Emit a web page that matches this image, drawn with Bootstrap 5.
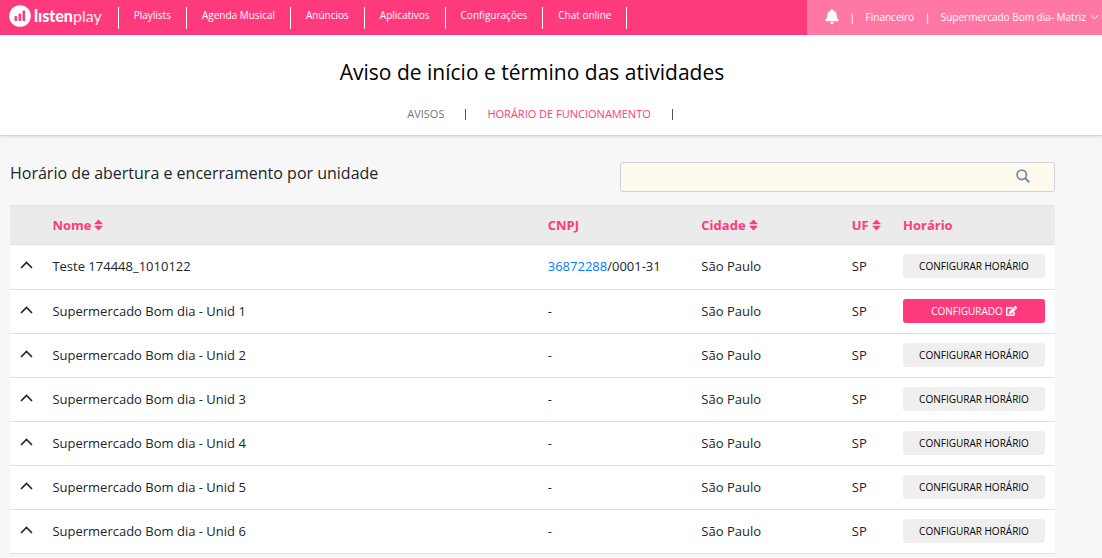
<!DOCTYPE html>
<html lang="pt-BR">
<head>
<meta charset="utf-8">
<meta name="viewport" content="width=device-width, initial-scale=1">
<title>Listenplay - Horário de funcionamento</title>
<link href="https://cdn.jsdelivr.net/npm/bootstrap@5.3.0/dist/css/bootstrap.min.css" rel="stylesheet">
<script src="https://cdn.jsdelivr.net/npm/bootstrap@5.3.0/dist/js/bootstrap.bundle.min.js" defer></script>
<style>
:root { --pink: #ff3a7c; --pink-light: #ff78a5; }
body { font-family: "Open Sans", "Noto Sans", sans-serif; font-size: 13px; line-height: 20px; background: #f7f7f7; color: #212529; }
a { text-decoration: none; }
svg { display: block; flex: none; }
.topbar { background: var(--pink); height: 35px; color: #fff; font-size: 10px; line-height: 14px; }
.topbar a { color: #fff; }
.brand { padding: 5px 16px 0 9px; gap: 3px; }
.brand-name { font-family: Lato, sans-serif; font-size: 16px; line-height: 22px; font-weight: 900; }
.brand-name span { font-weight: 400; opacity: .9; }
.main-menu { margin: 7px 0 0; height: 22px; border-left: 1px solid #fff; }
.main-menu li { border-right: 1px solid #fff; padding: 1px 15px 0; }
.account { background: var(--pink-light); width: 295px; padding: 0 3px 2px 18px; }
.page-head { background: #fff; border-bottom: 1px solid #d3d6d6; box-shadow: 0 1px 3px rgba(0,0,0,.1); padding: 23px 0 11px; height: 101px; }
.page-head h1 { font-size: 21px; line-height: 28px; font-weight: 400; color: #000; margin: 0 38px 20px 0; }
.tabs { font-size: 11px; line-height: 16px; gap: 21px; margin-right: 22px; }
.tabs a { color: #777; }
.tabs a.active { color: var(--pink); }
.tabs i { width: 1px; height: 11px; background: #555; }
.content-area { margin: 26px 47px 0 10px; }
.content-area h2 { font-size: 16px; line-height: 22px; margin: 0; }
.search-box { width: 435px; height: 30px; background: #fffaee; border: 1px solid #cdd1da; border-radius: 3px; padding: 0 24px 2px 0; }
.search-box input { background: transparent; border: 0; outline: 0; min-width: 0; padding: 0 10px; }
.search-box button { background: none; border: 0; padding: 0; }
.units { margin: 13px 0 0; table-layout: fixed; --bs-table-bg: #fff; --bs-table-color: #212529; }
.units > :not(caption) > * > * { padding: 0 10px 1px; height: 44px; border-color: #dee2e6; vertical-align: middle; white-space: nowrap; }
.units > tbody > tr:first-child > td { height: 45px; padding-bottom: 2px; }
.units > thead > tr > th { height: 39px; padding-bottom: 0; background: #ebebeb; color: var(--pink); font-weight: 700; border-top: 1px solid #dee2e6; }
.sort { background: none; border: 0; padding: 0; font-weight: 700; color: inherit; display: inline-flex; align-items: center; gap: 3px; }
.toggle { background: none; border: 0; padding: 0 0 2px; display: block; }
.units tbody .cfg { width: 100%; height: 24px; display: flex; align-items: center; justify-content: center; gap: 3px; padding: 0; font-size: 10px; line-height: 14px; background: #efefef; color: #000; border: 0; border-radius: 3px; }
.units tbody .cfg.done { background: var(--pink); color: #fff; }
.units a { color: #007bff; }
</style>
</head>
<body>
<svg width="0" height="0" class="position-absolute" aria-hidden="true">
  <symbol id="sort" viewBox="0 0 10 12"><path d="M5 0.2 9.3 4.8H.7zM5 11.8.7 7.2h8.6z" fill="currentColor" stroke="currentColor" stroke-width=".6" stroke-linejoin="round"/></symbol>
  <symbol id="up" viewBox="0 0 13 8"><path d="M1 7 6.5 1.500 12 7" fill="none" stroke="#212529" stroke-width="1.600"/></symbol>
</svg>
<header class="topbar d-flex">
  <a class="brand d-flex align-items-start" href="#">
    <svg width="22" height="22" viewBox="0 0 22 22"><circle cx="11" cy="11" r="10.800" fill="#fff"/><g fill="#ff3a7c"><rect x="5.500" y="11" width="2.600" height="5" rx="1"/><rect x="9.500" y="8.500" width="2.600" height="7.500" rx="1"/><rect x="13.500" y="5.500" width="2.600" height="10.500" rx="1"/></g></svg>
    <div class="brand-name">lısten<span>play</span></div>
  </a>
  <ul class="main-menu list-unstyled d-flex">
    <li><a href="#">Playlists</a></li><li><a href="#">Agenda Musical</a></li><li><a href="#">Anúncios</a></li><li><a href="#">Aplicativos</a></li><li><a href="#">Configurações</a></li><li><a href="#">Chat online</a></li>
  </ul>
  <div class="account ms-auto d-flex align-items-center justify-content-between">
    <a href="#" aria-label="Notificações"><svg width="14" height="15" viewBox="0 0 448 512"><path fill="#fff" d="M224 512c35.300 0 64-28.700 64-64H160c0 35.300 28.600 64 64 64zm215.400-149.700C420 341.500 383.900 310.300 383.900 208c0-77.700-54.500-139.900-127.900-155.200V32c0-17.700-14.300-32-32-32s-32 14.300-32 32v20.800C118.600 68.100 64.100 130.300 64.100 208c0 102.300-36.100 133.500-55.500 154.300C2.600 368.700 0 376.500 0 384c.1 16.400 13 32 32.100 32h383.800c19.100 0 32-15.600 32.100-32 0-7.500-2.600-15.300-8.600-21.700z"/></svg></a>
    <span>|</span><a href="#">Financeiro</a><span>|</span>
    <a href="#" class="d-flex align-items-center gap-1">Supermercado Bom dia- Matriz <svg width="9" height="6" viewBox="0 0 9 6"><path d="M.7 1 4.500 4.800 8.300 1" fill="none" stroke="#fff"/></svg></a>
  </div>
</header>
<section class="page-head d-flex flex-column align-items-center">
  <h1>Aviso de início e término das atividades</h1>
  <nav class="tabs d-flex align-items-center"><a href="#">AVISOS</a><i></i><a href="#" class="active">HORÁRIO DE FUNCIONAMENTO</a><i></i></nav>
</section>
<main class="content-area">
  <div class="d-flex justify-content-between align-items-start">
    <h2>Horário de abertura e encerramento por unidade</h2>
    <form class="search-box d-flex align-items-center">
      <input type="search" class="flex-fill" aria-label="Buscar unidade">
      <button type="button" aria-label="Buscar"><svg width="14" height="14" viewBox="0 0 14 14"><g fill="none" stroke="#7590a0" stroke-width="1.800"><circle cx="5.800" cy="5.800" r="4.700"/><path d="m9.200 9.200 4 4" stroke-width="2.200"/></g></svg></button>
    </form>
  </div>
  <table class="table units">
    <colgroup><col style="width:3.1%"><col style="width:47.4%"><col style="width:14.700%"><col style="width:14.400%"><col style="width:4.900%"><col style="width:15.500%"></colgroup>
    <thead><tr><th></th><th><button class="sort">Nome <svg width="9" height="12"><use href="#sort"/></svg></button></th><th>CNPJ</th><th><button class="sort">Cidade <svg width="9" height="12"><use href="#sort"/></svg></button></th><th><button class="sort">UF <svg width="9" height="12"><use href="#sort"/></svg></button></th><th>Horário</th></tr></thead>
    <tbody>
      <tr><td><button class="toggle" aria-label="Expandir"><svg width="13" height="8"><use href="#up"/></svg></button></td><td>Teste 174448_1010122</td><td><a href="#">36872288</a>/0001-31</td><td>São Paulo</td><td>SP</td><td><button class="cfg">CONFIGURAR HORÁRIO</button></td></tr>
      <tr><td><button class="toggle" aria-label="Expandir"><svg width="13" height="8"><use href="#up"/></svg></button></td><td>Supermercado Bom dia - Unid 1</td><td>-</td><td>São Paulo</td><td>SP</td><td><button class="cfg done">CONFIGURADO <svg width="11" height="10" viewBox="0 0 576 512"><path fill="#fff" stroke="#fff" stroke-width="20" d="M402.600 83.200l90.200 90.200c3.800 3.800 3.800 10 0 13.800L274.400 405.600l-92.800 10.300c-12.400 1.400-22.900-9.100-21.500-21.500l10.300-92.800L388.800 83.200c3.800-3.800 10-3.800 13.800 0zm162-22.900l-48.800-48.800c-15.200-15.200-39.900-15.200-55.200 0l-35.400 35.400c-3.800 3.800-3.800 10 0 13.800l90.200 90.200c3.800 3.800 10 3.800 13.800 0l35.400-35.400c15.200-15.300 15.200-40 0-55.200zM384 346.200V448H64V128h229.800c3.200 0 6.200-1.300 8.500-3.500l40-40c7.600-7.600 2.200-20.500-8.500-20.500H48C21.500 64 0 85.500 0 112v352c0 26.500 21.500 48 48 48h352c26.500 0 48-21.500 48-48V306.200c0-10.700-12.900-16-20.500-8.500l-40 40c-2.200 2.300-3.500 5.300-3.500 8.500z"/></svg></button></td></tr>
      <tr><td><button class="toggle" aria-label="Expandir"><svg width="13" height="8"><use href="#up"/></svg></button></td><td>Supermercado Bom dia - Unid 2</td><td>-</td><td>São Paulo</td><td>SP</td><td><button class="cfg">CONFIGURAR HORÁRIO</button></td></tr>
      <tr><td><button class="toggle" aria-label="Expandir"><svg width="13" height="8"><use href="#up"/></svg></button></td><td>Supermercado Bom dia - Unid 3</td><td>-</td><td>São Paulo</td><td>SP</td><td><button class="cfg">CONFIGURAR HORÁRIO</button></td></tr>
      <tr><td><button class="toggle" aria-label="Expandir"><svg width="13" height="8"><use href="#up"/></svg></button></td><td>Supermercado Bom dia - Unid 4</td><td>-</td><td>São Paulo</td><td>SP</td><td><button class="cfg">CONFIGURAR HORÁRIO</button></td></tr>
      <tr><td><button class="toggle" aria-label="Expandir"><svg width="13" height="8"><use href="#up"/></svg></button></td><td>Supermercado Bom dia - Unid 5</td><td>-</td><td>São Paulo</td><td>SP</td><td><button class="cfg">CONFIGURAR HORÁRIO</button></td></tr>
      <tr><td><button class="toggle" aria-label="Expandir"><svg width="13" height="8"><use href="#up"/></svg></button></td><td>Supermercado Bom dia - Unid 6</td><td>-</td><td>São Paulo</td><td>SP</td><td><button class="cfg">CONFIGURAR HORÁRIO</button></td></tr>
    </tbody>
  </table>
</main>
</body>
</html>
